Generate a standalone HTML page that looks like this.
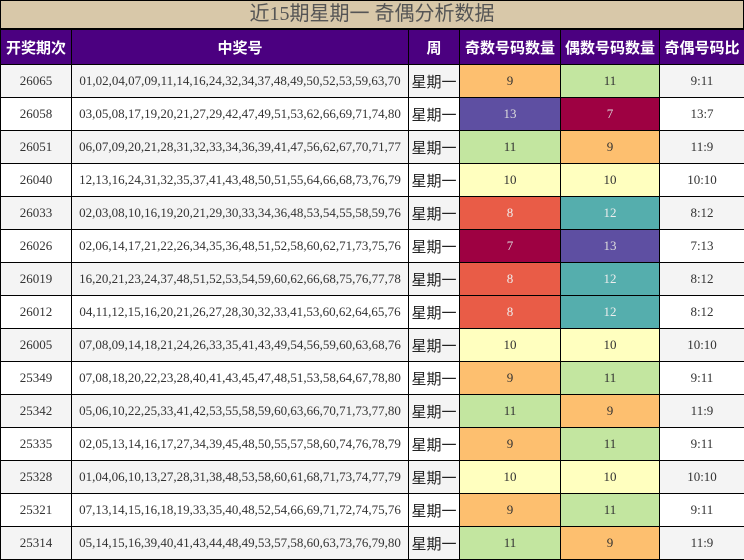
<!DOCTYPE html><html><head><meta charset="utf-8"><style>
body{margin:0;width:744px;height:560px;overflow:hidden;background:#fff;font-family:"Liberation Serif","Noto Serif CJK SC",serif}
.t{background:#d8c8a9;border:1px solid #000;border-bottom:2px solid #000;box-sizing:border-box;height:30px;text-align:center;font:20px/27px "Liberation Serif","Noto Sans CJK SC",serif;color:#555}
table{border-collapse:collapse;table-layout:fixed;width:744px;margin-top:-1px}
td,th{border:1px solid #000;text-align:center;padding:0;font-size:13px;color:#333;height:32px}
th{background:#4b0080;color:#fff;font:bold 15px "Liberation Sans","Noto Sans CJK SC",sans-serif;height:34px}
tr:nth-child(even) td{background:#f4f4f4}
td.w{font:15px/15px "Liberation Sans","Noto Sans CJK SC",sans-serif;color:#222;padding-top:3px;height:29px}
tr td.a{background:#fdbf6f}tr td.b{background:#c3e6a0}tr td.c{background:#5e4fa2;color:#ddd}tr td.d{background:#9e0142;color:#ddd}tr td.e{background:#ffffbf}tr td.f{background:#e95c47;color:#eee}tr td.g{background:#55aead;color:#eee}
</style></head><body>
<div class="t">近15期星期一 奇偶分析数据</div>
<table><colgroup><col style="width:71px"><col style="width:337px"><col style="width:51px"><col style="width:101px"><col style="width:99px"><col style="width:85px"></colgroup>
<tr><th>开奖期次</th><th>中奖号</th><th>周</th><th>奇数号码数量</th><th>偶数号码数量</th><th>奇偶号码比</th></tr>
<tr><td>26065</td><td>01,02,04,07,09,11,14,16,24,32,34,37,48,49,50,52,53,59,63,70</td><td class="w">星期一</td><td class="a">9</td><td class="b">11</td><td>9:11</td></tr>
<tr><td>26058</td><td>03,05,08,17,19,20,21,27,29,42,47,49,51,53,62,66,69,71,74,80</td><td class="w">星期一</td><td class="c">13</td><td class="d">7</td><td>13:7</td></tr>
<tr><td>26051</td><td>06,07,09,20,21,28,31,32,33,34,36,39,41,47,56,62,67,70,71,77</td><td class="w">星期一</td><td class="b">11</td><td class="a">9</td><td>11:9</td></tr>
<tr><td>26040</td><td>12,13,16,24,31,32,35,37,41,43,48,50,51,55,64,66,68,73,76,79</td><td class="w">星期一</td><td class="e">10</td><td class="e">10</td><td>10:10</td></tr>
<tr><td>26033</td><td>02,03,08,10,16,19,20,21,29,30,33,34,36,48,53,54,55,58,59,76</td><td class="w">星期一</td><td class="f">8</td><td class="g">12</td><td>8:12</td></tr>
<tr><td>26026</td><td>02,06,14,17,21,22,26,34,35,36,48,51,52,58,60,62,71,73,75,76</td><td class="w">星期一</td><td class="d">7</td><td class="c">13</td><td>7:13</td></tr>
<tr><td>26019</td><td>16,20,21,23,24,37,48,51,52,53,54,59,60,62,66,68,75,76,77,78</td><td class="w">星期一</td><td class="f">8</td><td class="g">12</td><td>8:12</td></tr>
<tr><td>26012</td><td>04,11,12,15,16,20,21,26,27,28,30,32,33,41,53,60,62,64,65,76</td><td class="w">星期一</td><td class="f">8</td><td class="g">12</td><td>8:12</td></tr>
<tr><td>26005</td><td>07,08,09,14,18,21,24,26,33,35,41,43,49,54,56,59,60,63,68,76</td><td class="w">星期一</td><td class="e">10</td><td class="e">10</td><td>10:10</td></tr>
<tr><td>25349</td><td>07,08,18,20,22,23,28,40,41,43,45,47,48,51,53,58,64,67,78,80</td><td class="w">星期一</td><td class="a">9</td><td class="b">11</td><td>9:11</td></tr>
<tr><td>25342</td><td>05,06,10,22,25,33,41,42,53,55,58,59,60,63,66,70,71,73,77,80</td><td class="w">星期一</td><td class="b">11</td><td class="a">9</td><td>11:9</td></tr>
<tr><td>25335</td><td>02,05,13,14,16,17,27,34,39,45,48,50,55,57,58,60,74,76,78,79</td><td class="w">星期一</td><td class="a">9</td><td class="b">11</td><td>9:11</td></tr>
<tr><td>25328</td><td>01,04,06,10,13,27,28,31,38,48,53,58,60,61,68,71,73,74,77,79</td><td class="w">星期一</td><td class="e">10</td><td class="e">10</td><td>10:10</td></tr>
<tr><td>25321</td><td>07,13,14,15,16,18,19,33,35,40,48,52,54,66,69,71,72,74,75,76</td><td class="w">星期一</td><td class="a">9</td><td class="b">11</td><td>9:11</td></tr>
<tr><td>25314</td><td>05,14,15,16,39,40,41,43,44,48,49,53,57,58,60,63,73,76,79,80</td><td class="w">星期一</td><td class="b">11</td><td class="a">9</td><td>11:9</td></tr>
</table></body></html>
